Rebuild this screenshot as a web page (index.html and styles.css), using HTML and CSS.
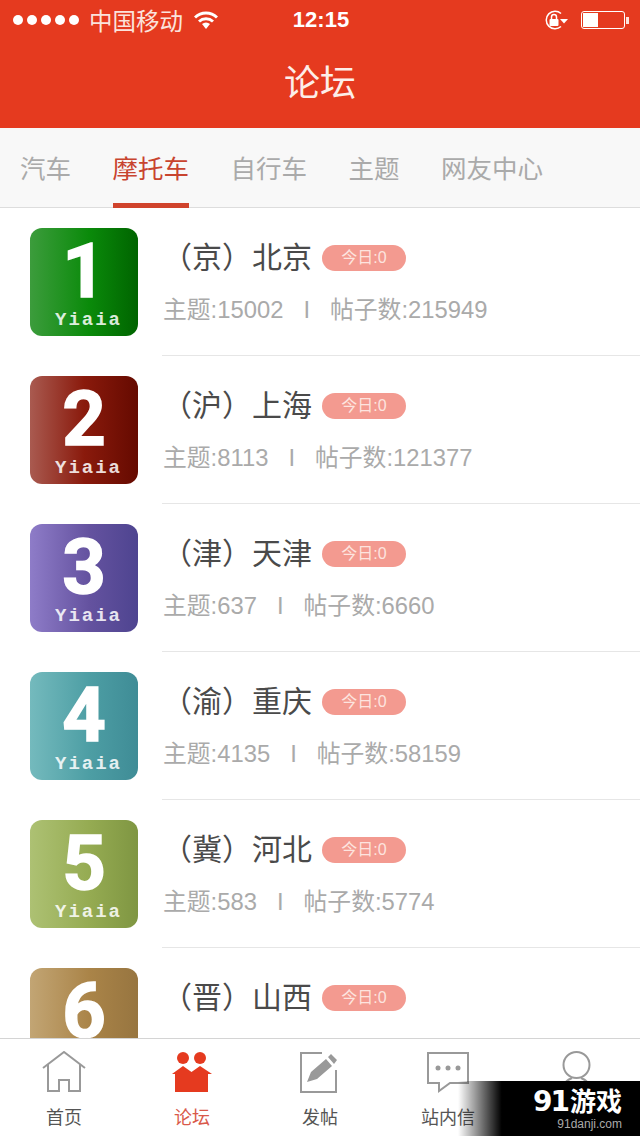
FILE: index.html
```html
<!DOCTYPE html>
<html lang="zh-CN">
<head>
  <meta charset="UTF-8" />
  <meta name="viewport" content="width=device-width, initial-scale=1.0"/>
  <title>论坛</title>
  <link rel="stylesheet" href="styles.css">
</head>
<body>
<div class="app">

  <header class="top">
    <div class="status">
      <div class="status-left">
        <span class="dots"><i></i><i></i><i></i><i></i><i></i></span>
        <span class="carrier">中国移动</span>
        <svg class="wifi" width="24" height="18" viewBox="0 0 24 18">
          <path d="M1 6.5 A16 16 0 0 1 23 6.5" fill="none" stroke="#fff" stroke-width="3"/>
          <path d="M5 10.5 A10.5 10.5 0 0 1 19 10.5" fill="none" stroke="#fff" stroke-width="3"/>
          <path d="M8 13 A6 6 0 0 1 16 13 L12 18 Z" fill="#fff"/>
        </svg>
      </div>
      <div class="time">12:15</div>
      <div class="status-right">
        <svg width="24" height="20" viewBox="0 0 24 20">
          <path d="M16 3.5 A8.8 8.8 0 1 0 16 16.5" fill="none" stroke="#fff" stroke-width="1.5"/>
          <path d="M15 9 H23 L19 13.5 Z" fill="#fff"/>
          <rect x="4.5" y="9" width="9" height="7" rx="1" fill="#fff"/>
          <path d="M6.5 9 V7 A2.5 2.5 0 0 1 11.5 7 V9" fill="none" stroke="#fff" stroke-width="1.5"/>
        </svg>
        <div class="battery"><div class="battery-fill"></div></div>
        <div class="battery-nub"></div>
      </div>
    </div>
    <h1 class="title">论坛</h1>
  </header>

  <nav class="tabs">
    <a href="#">汽车</a>
    <a href="#" class="active">摩托车</a>
    <a href="#">自行车</a>
    <a href="#">主题</a>
    <a href="#">网友中心</a>
  </nav>

  <main class="list">
    <div class="row">
      <div class="badge ic1"><span class="num">1</span><span class="brand">Yiaia</span></div>
      <div class="info">
        <div class="name">（京）北京<span class="today">今日:0</span></div>
        <div class="meta">主题:15002<span class="sep">I</span>帖子数:215949</div>
      </div>
    </div>
    <div class="row">
      <div class="badge ic2"><span class="num">2</span><span class="brand">Yiaia</span></div>
      <div class="info">
        <div class="name">（沪）上海<span class="today">今日:0</span></div>
        <div class="meta">主题:8113<span class="sep">I</span>帖子数:121377</div>
      </div>
    </div>
    <div class="row">
      <div class="badge ic3"><span class="num">3</span><span class="brand">Yiaia</span></div>
      <div class="info">
        <div class="name">（津）天津<span class="today">今日:0</span></div>
        <div class="meta">主题:637<span class="sep">I</span>帖子数:6660</div>
      </div>
    </div>
    <div class="row">
      <div class="badge ic4"><span class="num">4</span><span class="brand">Yiaia</span></div>
      <div class="info">
        <div class="name">（渝）重庆<span class="today">今日:0</span></div>
        <div class="meta">主题:4135<span class="sep">I</span>帖子数:58159</div>
      </div>
    </div>
    <div class="row">
      <div class="badge ic5"><span class="num">5</span><span class="brand">Yiaia</span></div>
      <div class="info">
        <div class="name">（冀）河北<span class="today">今日:0</span></div>
        <div class="meta">主题:583<span class="sep">I</span>帖子数:5774</div>
      </div>
    </div>
    <div class="row">
      <div class="badge ic6"><span class="num">6</span></div>
      <div class="info">
        <div class="name">（晋）山西<span class="today">今日:0</span></div>
      </div>
    </div>
  </main>

  <footer class="bar">
    <a href="#" class="bar-item">
      <svg width="44" height="44" viewBox="0 0 44 44" fill="none" stroke="#999" stroke-width="2">
        <path d="M1 17 L22 1 L43 17"/>
        <path d="M6 13 V40 H17 V29 H27 V40 H38 V13"/>
      </svg>
      <span>首页</span>
    </a>
    <a href="#" class="bar-item active">
      <svg width="44" height="44" viewBox="0 0 44 44" fill="#e53a1f">
        <circle cx="13" cy="7" r="6"/>
        <circle cx="30" cy="7" r="6"/>
        <path d="M2 23 L13 15 L21.5 21 L30 15 L42 23 H38 V41 H5 V23 Z"/>
      </svg>
      <span>论坛</span>
    </a>
    <a href="#" class="bar-item">
      <svg width="44" height="44" viewBox="0 0 44 44" fill="none">
        <path d="M24 2 H3 V41 H38 V19" stroke="#999" stroke-width="2"/>
        <path d="M9 31 L13 21 L28 8 L34 15 L19 28 Z M30 6 L33 3 L39 9 L36 13 Z" fill="#999"/>
      </svg>
      <span>发帖</span>
    </a>
    <a href="#" class="bar-item">
      <svg width="44" height="44" viewBox="0 0 44 44" fill="none">
        <path d="M2 2 H42 V32 H24 L13 40 V32 H2 Z" stroke="#999" stroke-width="2"/>
        <circle cx="12" cy="17" r="2.5" fill="#999"/>
        <circle cx="22" cy="17" r="2.5" fill="#999"/>
        <circle cx="32" cy="17" r="2.5" fill="#999"/>
      </svg>
      <span>站内信</span>
    </a>
    <a href="#" class="bar-item">
      <svg width="44" height="44" viewBox="0 0 44 44" fill="none" stroke="#999" stroke-width="2">
        <circle cx="22.5" cy="14" r="13"/>
        <path d="M10 34 C12 29 16 28 18 27 M35 34 C33 29 29 28 27 27"/>
      </svg>
    </a>
  </footer>

  <div class="watermark">
    <div class="wm-logo"><span class="wm-num">91</span>游戏</div>
    <div class="wm-url">91danji.com</div>
  </div>

</div>
</body>
</html>
```

FILE: styles.css
```css
* { box-sizing: border-box; }
body { margin: 0; background: #fff; font-family: "Liberation Sans", "Noto Sans CJK SC", sans-serif; color: #4a4a4a; }
a { text-decoration: none; color: inherit; }

.app { position: relative; width: 640px; height: 1136px; display: flex; flex-direction: column; overflow: hidden; }

/* red header + status bar */
.top { background: #e53a1f; color: #fff; height: 128px; flex: none; }
.status { height: 40px; display: grid; grid-template-columns: 1fr auto 1fr; align-items: center; padding: 0 11px 0 13px; }
.status-left { display: flex; align-items: center; }
.dots { display: flex; gap: 4px; }
.dots i { width: 10px; height: 10px; border-radius: 50%; background: #fff; }
.carrier { font-size: 23.5px; margin-left: 10px; color: #fbe3dc; }
.wifi { margin-left: 11px; }
.time { font-size: 22px; font-weight: bold; }
.status-right { display: flex; align-items: center; justify-content: flex-end; }
.battery { width: 44px; height: 18px; margin-left: 12px; border: 1px solid #fff; border-radius: 3px; padding: 1px; }
.battery-fill { width: 15px; height: 100%; background: #fff; }
.battery-nub { width: 3px; height: 7px; background: #fbe3dc; margin-left: 1px; }
.title { margin: 0; height: 88px; font-size: 36px; font-weight: 400; line-height: 88px; text-align: center; color: #fdeee9; }

/* tabs */
.tabs { height: 80px; flex: none; display: flex; gap: 41.5px; padding-left: 20px; background: #f8f8f8; border-bottom: 1px solid #ddd; }
.tabs a { height: 80px; line-height: 82px; font-size: 25.5px; color: #aaa; }
.tabs a.active { color: #c8442f; border-bottom: 5px solid #d0432c; }

/* forum rows */
.list { flex: 1; overflow: hidden; }
.row { height: 148px; display: flex; gap: 24px; padding-left: 30px; }
.badge { width: 108px; height: 108px; margin-top: 20px; flex: none; border-radius: 12px; display: flex; flex-direction: column; align-items: center; color: #fff; }
.num { font-family: Roboto, "Liberation Sans", sans-serif; font-size: 76px; font-weight: 700; line-height: 76px; margin-top: 5px; -webkit-text-stroke: 1.5px #fff; }
.brand { font-family: "Liberation Mono", monospace; font-size: 19px; font-weight: bold; line-height: 18px; letter-spacing: 2px; margin: 2px 0 0 9px; opacity: .85; }
.ic1 { background: linear-gradient(to right, #3c9c3c, #0a8a0a 55%, #006400); }
.ic2 { background: linear-gradient(to right, #a95a50, #8a1a0c 50%, #650a00); }
.ic3 { background: linear-gradient(to right, #8e7cc8, #64529f 55%, #4e4490); }
.ic4 { background: linear-gradient(to right, #74babd, #4d9ea4 55%, #3f8c96); }
.ic5 { background: linear-gradient(to right, #adc173, #95ab52 55%, #7f9642); }
.ic6 { background: linear-gradient(to right, #c2a574, #aa8448 55%, #977540); }

.info { flex: 1; height: 148px; padding-top: 30px; border-bottom: 1px solid #e6e6e6; }
.row:last-child .info { border-bottom: none; }
.name { height: 40px; font-size: 30px; line-height: 40px; display: flex; align-items: center; white-space: nowrap; }
.today { width: 84px; height: 26px; margin-left: 10px; border-radius: 13px; background: #f39a90; color: #fde4df; font-size: 16px; line-height: 26px; text-align: center; }
.meta { margin-top: 16px; height: 32px; line-height: 32px; font-size: 23.8px; color: #aaa; white-space: nowrap; padding-left: 1px; }
.sep { margin: 0 20px; }

/* bottom tab bar */
.bar { height: 98px; flex: none; display: grid; grid-template-columns: repeat(5, 1fr); background: #fff; border-top: 1px solid #d4d4d4; }
.bar-item { display: flex; flex-direction: column; align-items: center; padding-top: 12px; font-size: 18px; color: #555; }
.bar-item span { margin-top: 11px; line-height: 24px; }
.bar-item.active span { color: #d9594a; }

/* image host stamp over the corner */
.watermark { position: absolute; right: 0; bottom: 0; width: 182px; height: 55px; padding-right: 18px; text-align: right; background: linear-gradient(to right, rgba(0,0,0,0), #000 24%); color: #fff; }
.wm-logo { font-size: 26px; font-weight: bold; line-height: 30px; margin-top: 6px; }
.wm-num { font-family: "DejaVu Sans", sans-serif; font-size: 28px; letter-spacing: -2px; margin-right: 2px; }
.wm-url { font-size: 12px; line-height: 15px; color: #aaa; }
```
